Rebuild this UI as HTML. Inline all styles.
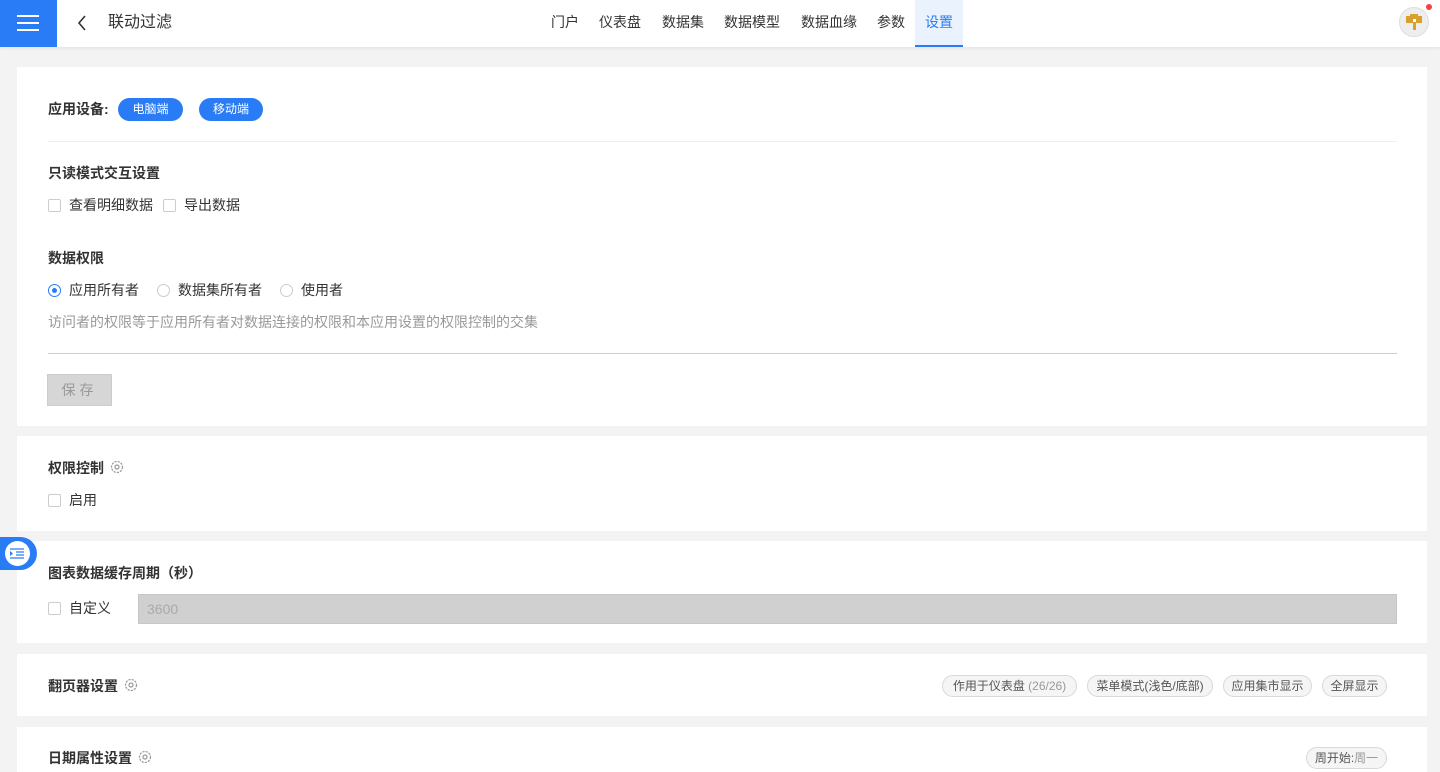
<!DOCTYPE html>
<html><head><meta charset="utf-8"><style>
*{margin:0;padding:0;box-sizing:border-box}
body{width:1440px;height:772px;overflow:hidden;background:#f3f3f3;font-family:"Liberation Sans","Noto Sans CJK SC",sans-serif;color:#333;font-size:14px;position:relative}
.a{position:absolute}
.top{left:0;top:0;width:1440px;height:47px;background:#fff;box-shadow:0 1px 4px rgba(0,0,0,.08)}
.menu{left:0;top:0;width:57px;height:47px;background:#2a7cf6}
.menu i{position:absolute;left:17px;width:22px;height:2px;background:#fff}
.nav{top:0;height:47px;line-height:44px;font-size:14px;color:#333}
.card{left:17px;width:1410px;background:#fff}
.t{font-size:14px;font-weight:bold;color:#333;line-height:20px}
.pill{height:23px;line-height:23px;border-radius:12px;background:#2a7cf6;color:#fff;font-size:12px;text-align:center}
.cb{width:13px;height:13px;border:1px solid #ccc;border-radius:2px;background:#fff}
.rd{width:13px;height:13px;border:1px solid #ccc;border-radius:50%;background:#fff}
.lbl{font-size:14px;line-height:20px;color:#333}
.tag{height:22px;line-height:20px;border:1px solid #d9d9d9;border-radius:11px;background:#f5f5f5;color:#555;font-size:12px;padding:0 7px;text-align:center}
.gear{width:14px;height:14px}
</style></head><body>
<div class="a top"></div>
<div class="a menu"><i style="top:15px"></i><i style="top:22px"></i><i style="top:29px"></i></div>
<svg class="a" style="left:76px;top:15px" width="12" height="16"><path d="M9 1 L3 8 L9 15" stroke="#333" stroke-width="1.6" fill="none"/></svg>
<div class="a" style="left:108px;top:12px;font-size:16px;line-height:22px;color:#333">联动过滤</div>
<div class="a nav" style="left:551px">门户</div>
<div class="a nav" style="left:599px">仪表盘</div>
<div class="a nav" style="left:662px">数据集</div>
<div class="a nav" style="left:724px">数据模型</div>
<div class="a nav" style="left:801px">数据血缘</div>
<div class="a nav" style="left:877px">参数</div>
<div class="a nav" style="left:915px;width:48px;text-align:center;background:#eaf2fe;color:#2a7cf6;border-bottom:2px solid #2a7cf6">设置</div>
<div class="a" style="left:1399px;top:7px;width:30px;height:30px;border-radius:50%;background:#eee;border:1px solid #ddd"></div>
<svg class="a" style="left:1403px;top:11px" width="22" height="22"><rect x="3" y="5" width="16" height="7" fill="#d9a030"/><rect x="7" y="3" width="8" height="3" fill="#d9a030"/><rect x="10" y="11" width="3" height="8" fill="#d9a030"/><rect x="10" y="8" width="3" height="3" fill="#fff"/></svg>
<div class="a" style="left:1426px;top:4px;width:6px;height:6px;border-radius:50%;background:#f5413f"></div>

<div class="a card" style="top:67px;height:359px"></div>
<div class="a t" style="left:48px;top:99px">应用设备:</div>
<div class="a pill" style="left:118px;top:98px;width:65px">电脑端</div>
<div class="a pill" style="left:199px;top:98px;width:64px">移动端</div>
<div class="a" style="left:48px;top:141px;width:1349px;height:1px;background:#eee"></div>
<div class="a t" style="left:48px;top:163px">只读模式交互设置</div>
<div class="a cb" style="left:48px;top:199px"></div><div class="a lbl" style="left:69px;top:195px">查看明细数据</div>
<div class="a cb" style="left:163px;top:199px"></div><div class="a lbl" style="left:184px;top:195px">导出数据</div>
<div class="a t" style="left:48px;top:248px">数据权限</div>
<div class="a rd" style="left:48px;top:284px;border-color:#2a7cf6"></div><div class="a" style="left:52px;top:288px;width:5px;height:5px;border-radius:50%;background:#2a7cf6"></div>
<div class="a lbl" style="left:69px;top:280px">应用所有者</div>
<div class="a rd" style="left:157px;top:284px"></div><div class="a lbl" style="left:178px;top:280px">数据集所有者</div>
<div class="a rd" style="left:280px;top:284px"></div><div class="a lbl" style="left:301px;top:280px">使用者</div>
<div class="a lbl" style="left:48px;top:312px;color:#999">访问者的权限等于应用所有者对数据连接的权限和本应用设置的权限控制的交集</div>
<div class="a" style="left:48px;top:353px;width:1349px;height:1px;background:#ccc"></div>
<div class="a" style="left:47px;top:374px;width:65px;height:32px;background:#d6d6d6;border:1px solid #ccc;color:#999;text-align:center;line-height:30px;letter-spacing:4px">保存</div>

<div class="a card" style="top:436px;height:95px"></div>
<div class="a t" style="left:48px;top:458px">权限控制</div>
<svg class="a gear" style="left:110px;top:460px" viewBox="0 0 14 14"><circle cx="7" cy="7" r="5.5" fill="none" stroke="#999" stroke-width="1.2" stroke-dasharray="2.2 1.1"/><circle cx="7" cy="7" r="2" fill="none" stroke="#999" stroke-width="1.2"/></svg>
<div class="a cb" style="left:48px;top:494px"></div><div class="a lbl" style="left:69px;top:490px">启用</div>

<div class="a card" style="top:541px;height:102px"></div>
<div class="a t" style="left:48px;top:563px">图表数据缓存周期（秒）</div>
<div class="a cb" style="left:48px;top:602px"></div><div class="a lbl" style="left:69px;top:598px">自定义</div>
<div class="a" style="left:138px;top:594px;width:1259px;height:30px;background:#d0d0d0;border:1px solid #c6c6c6;color:#aaa;line-height:28px;padding-left:8px">3600</div>

<div class="a" style="left:0;top:537px;width:37px;height:33px;border-radius:0 17px 17px 0;background:#2a7cf6"></div>
<div class="a" style="left:5px;top:541px;width:25px;height:25px;border-radius:50%;background:#fff"></div>
<svg class="a" style="left:9px;top:546px" width="17" height="14"><path d="M1 3h14M7 6h8M7 9h8M1 12h14" stroke="#2a7cf6" stroke-width="1.3"/><path d="M1 5l3 2.5-3 2.5z" fill="#2a7cf6"/></svg>

<div class="a card" style="top:654px;height:62px"></div>
<div class="a t" style="left:48px;top:676px">翻页器设置</div>
<svg class="a gear" style="left:124px;top:678px" viewBox="0 0 14 14"><circle cx="7" cy="7" r="5.5" fill="none" stroke="#999" stroke-width="1.2" stroke-dasharray="2.2 1.1"/><circle cx="7" cy="7" r="2" fill="none" stroke="#999" stroke-width="1.2"/></svg>
<div class="a tag" style="left:942px;top:675px;width:135px">作用于仪表盘 <span style="color:#999">(26/26)</span></div>
<div class="a tag" style="left:1087px;top:675px;width:126px">菜单模式(浅色/底部)</div>
<div class="a tag" style="left:1223px;top:675px;width:89px">应用集市显示</div>
<div class="a tag" style="left:1322px;top:675px;width:65px">全屏显示</div>

<div class="a card" style="top:727px;height:45px"></div>
<div class="a t" style="left:48px;top:748px">日期属性设置</div>
<svg class="a gear" style="left:138px;top:750px" viewBox="0 0 14 14"><circle cx="7" cy="7" r="5.5" fill="none" stroke="#999" stroke-width="1.2" stroke-dasharray="2.2 1.1"/><circle cx="7" cy="7" r="2" fill="none" stroke="#999" stroke-width="1.2"/></svg>
<div class="a tag" style="left:1306px;top:747px;width:81px">周开始:<span style="color:#999">周一</span></div>
</body></html>
